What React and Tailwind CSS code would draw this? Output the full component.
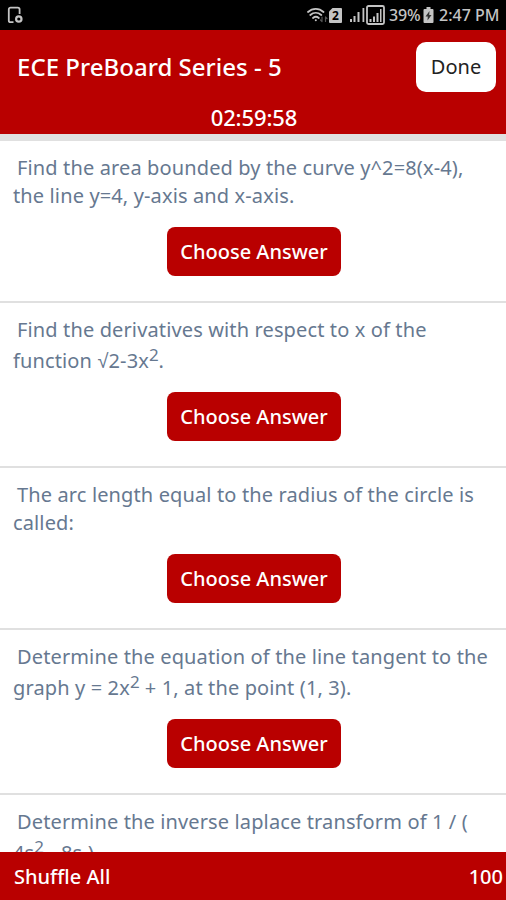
const QUESTIONS = [
  { id: 1, lines: ['Find the area bounded by the curve y^2=8(x-4),', 'the line y=4, y-axis and x-axis.'] },
  { id: 2, lines: ['Find the derivatives with respect to x of the', <>function √2-3x<Sup>2</Sup>.</>], tall: true },
  { id: 3, lines: ['The arc length equal to the radius of the circle is', 'called:'] },
  { id: 4, lines: ['Determine the equation of the line tangent to the', <>graph y = 2x<Sup>2</Sup> + 1, at the point (1, 3).</>], tall: true },
  { id: 5, lines: ['Determine the inverse laplace transform of 1 / (', <>4s<Sup>2</Sup> - 8s )</>], tall: true },
];

function Sup({ children }) {
  return <sup className="text-[17px] leading-none -top-[7px] tracking-[-0.200px]">{children}</sup>;
}

function StatusBar() {
  return (
    <div className="h-[30px] shrink-0 bg-black flex items-center text-[#c4c4c4] pl-[7px] pr-[6px]">
      <svg className="w-4 h-[18px]" viewBox="0 0 16 18" fill="none" stroke="currentColor">
        <path strokeWidth="1.800" d="M6.500 16.200H3.600A1.800 1.800 0 0 1 1.800 14.400V3.400A1.800 1.800 0 0 1 3.600 1.600h7.200a1.800 1.800 0 0 1 1.800 1.800V8" />
        <circle cx="11.800" cy="13" r="2.700" strokeWidth="2.200" />
      </svg>
      <div className="flex-1" />
      {/* Wifi */}
      <svg className="w-[22px] h-[18px]" viewBox="0 0 22 18" fill="none" stroke="currentColor" strokeWidth="1.800" strokeLinecap="round">
        <path d="M1 6C5.500 1.800 12 1.800 16.500 6M3.300 9c3.200-2.800 7.700-2.800 11 0M6 12c1.800-1.500 4-1.500 5.800 0" />
        <circle cx="8.800" cy="14.300" r="1" fill="currentColor" stroke="none" />
        <path stroke="#555" strokeWidth="1.200" d="M15 11v4.500m-1.500-1.500 1.500 1.500M18.500 15.500V11m1.500 1.500L18.500 11" />
      </svg>
      {/* SIM */}
      <div className="relative w-[13px] h-[15px]">
        <svg className="w-[13px] h-[15px]" viewBox="0 0 13 15" fill="currentColor">
          <path d="M3.500 0H12a1 1 0 0 1 1 1v13a1 1 0 0 1-1 1H1a1 1 0 0 1-1-1V3.500z" />
        </svg>
        <span className="absolute inset-0 text-black text-[12px] leading-[16px] font-bold text-center">2</span>
      </div>
      {/* Signal */}
      <svg className="ml-[7px] w-[36px] h-[20px]" viewBox="0 0 36 20" fill="currentColor">
        <path d="M1 14h2v3H1zM4.500 11h2v6h-2zM8.500 7h2v10h-2zM13.500 3h1.800v14h-1.800z" />
        <path fill="none" stroke="currentColor" strokeWidth="1.800" d="M19.500 1h14a1.500 1.500 0 0 1 1.500 1.500v15a1.500 1.500 0 0 1-1.500 1.500h-14a1.500 1.500 0 0 1-1.500-1.500v-15A1.500 1.500 0 0 1 19.500 1z" />
        <path d="M20.500 14h2v3h-2zM24 11.500h2V17h-2zM27.500 8h2v9h-2zM31 4h1.500v13H31z" />
      </svg>
      <span className="ml-[4px] w-[34px] text-[16px] leading-[30px] font-medium tracking-[-0.200px] whitespace-nowrap">39%</span>
      {/* Battery */}
      <svg className="w-[11px] h-[16px]" viewBox="0 0 10 16">
        <path fill="currentColor" d="M3 0h4v2h2a1 1 0 0 1 1 1v12a1 1 0 0 1-1 1H1a1 1 0 0 1-1-1V3a1 1 0 0 1 1-1h2z" />
        <path fill="#333" d="M6 4 2 9.500h2.300L4 13.500 8 8H5.700z" />
      </svg>
      <span className="ml-[5px] w-[61px] text-[16px] leading-[30px] font-medium whitespace-nowrap">2:47 PM</span>
    </div>
  );
}

function Question({ lines, tall }) {
  return (
    <div className={`shrink-0 border-b-2 border-[#e0e0e0] pt-[13px] px-[13px] ${tall ? 'h-[165px]' : 'h-[162px]'}`}>
      <p className="text-[20px] text-[#667890] tracking-[0.130px] whitespace-nowrap">
        <span className="block pl-1 leading-[28px]">{lines[0]}</span>
        <span className={`block ${tall ? 'leading-[28px] pt-[3px]' : 'leading-[28px]'}`}>{lines[1]}</span>
      </p>
      <button className="mt-[17px] ml-[154px] block w-[174px] h-[49px] rounded-lg bg-[#b90000] text-white text-[20px] font-medium">
        Choose Answer
      </button>
    </div>
  );
}

export default function App() {
  return (
    <div className="w-[506px] h-[900px] bg-white flex flex-col overflow-hidden font-['Noto_Sans',sans-serif]">
      <StatusBar />

      <header className="h-[104px] shrink-0 bg-[#b90000] text-white">
        <div className="flex items-start justify-between pt-3 pl-[17px] pr-[10px]">
          <h1 className="text-[24px] leading-[50px] font-medium tracking-[0.030px]">ECE PreBoard Series - 5</h1>
          <button className="w-[80px] h-[50px] rounded-[10px] bg-white text-[#222] text-[20px]">Done</button>
        </div>
        <div className="mt-[11px] pl-[2px] text-center text-[22px] leading-[28px] font-medium tracking-[-0.100px]">02:59:58</div>
      </header>
      <div className="h-[7px] shrink-0 bg-[#e0e0e0]" />

      <main className="flex-1 min-h-0 flex flex-col overflow-hidden">
        {QUESTIONS.map(q => <Question key={q.id} lines={q.lines} tall={q.tall} />)}
      </main>

      <footer className="h-12 shrink-0 bg-[#b90000] text-white flex items-center justify-between pt-0.5 pl-[14px] pr-[3px] text-[20px] font-medium">
        <span>Shuffle All</span>
        <span>100</span>
      </footer>
    </div>
  );
}
